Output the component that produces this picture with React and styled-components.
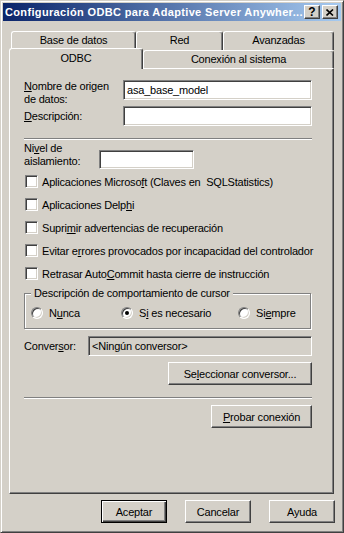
import React from "react";
import styled, { createGlobalStyle, css } from "styled-components";

const GlobalStyle = createGlobalStyle`
  * { box-sizing: border-box; }
  body {
    margin: 0;
    background: #d4d0c8;
    font-family: "Liberation Sans", Arial, sans-serif;
    font-size: 11px;
    letter-spacing: -0.2px;
    color: #000;
  }
`;

const raised = css`
  border: 1px solid;
  border-color: #fff #404040 #404040 #fff;
  box-shadow: inset -1px -1px #808080, inset 1px 1px #d4d0c8;
  background: #d4d0c8;
`;

const sunken = css`
  border: 1px solid;
  border-color: #808080 #fff #fff #808080;
  box-shadow: inset 1px 1px #404040, inset -1px -1px #d4d0c8;
`;

const Window = styled.div`
  width: 344px;
  height: 533px;
  padding: 2px;
  border: 1px solid;
  border-color: #d4d0c8 #404040 #404040 #d4d0c8;
  box-shadow: inset 1px 1px #fff, inset -1px -1px #808080;
  background: #d4d0c8;
  display: flex;
  flex-direction: column;
`;

const TitleBar = styled.div`
  height: 18px;
  display: flex;
  align-items: center;
  padding: 0 3px 0 2px;
  background: linear-gradient(to right, #0a246a, #a6caf0);
  color: #fff;
`;

const TitleText = styled.div`
  flex: 1;
  font-weight: bold;
  font-size: 11px;
  letter-spacing: 0.35px;
  white-space: nowrap;
  overflow: hidden;
`;

const TitleButton = styled.div`
  ${raised};
  width: 16px;
  height: 14px;
  margin-left: ${({ $gap }) => $gap || 0}px;
  display: flex;
  align-items: center;
  justify-content: center;
  color: #000;
  font-weight: bold;
  font-size: 12px;
  letter-spacing: 0;
  line-height: 1;
`;

const Body = styled.div`
  flex: 1;
  display: flex;
  flex-direction: column;
  padding: 10px 7px 0 6px;
`;

const BackRow = styled.div`
  display: flex;
  height: 19px;
  margin-bottom: -2px;
  padding-left: 2px;
`;

const FrontRow = styled.div`
  display: flex;
  align-items: flex-end;
  height: 20px;
`;

const Tab = styled.div`
  width: ${({ $w }) => $w}px;
  height: ${({ $h }) => $h || 19}px;
  margin-bottom: ${({ $active }) => ($active ? -1 : 0)}px;
  position: relative;
  z-index: ${({ $active }) => ($active ? 2 : 0)};
  background: #d4d0c8;
  border-top: 1px solid #fff;
  border-left: 1px solid #fff;
  border-right: 1px solid #404040;
  box-shadow: inset -1px 0 #808080;
  border-radius: 3px 3px 0 0;
  text-align: center;
  line-height: 13px;
  padding-top: ${({ $active }) => ($active ? 3 : 2)}px;
`;

const Panel = styled.div`
  position: relative;
  z-index: 1;
  width: 325px;
  height: 426px;
  border: 1px solid;
  border-color: #fff #404040 #404040 #fff;
  box-shadow: inset -1px -1px #808080;
  padding: 11px 21px 0 14px;
  display: flex;
  flex-direction: column;
`;

const FieldRow = styled.div`
  display: flex;
  align-items: ${({ $top }) => ($top ? "flex-start" : "center")};
  margin-top: ${({ $mt }) => $mt || 0}px;
`;

const Label = styled.div`
  width: ${({ $w }) => $w}px;
  flex: none;
  line-height: 13px;
`;

const TextBox = styled.div`
  ${sunken};
  width: ${({ $w }) => $w}px;
  height: ${({ $h }) => $h || 20}px;
  margin-top: ${({ $mt }) => $mt || 0}px;
  background: ${({ $disabled }) => ($disabled ? "#d4d0c8" : "#fff")};
  padding: 3px 3px 0;
  line-height: 13px;
  white-space: nowrap;
`;

const Separator = styled.div`
  height: 2px;
  border-top: 1px solid #808080;
  border-bottom: 1px solid #fff;
  margin-top: ${({ $mt }) => $mt}px;
`;

const CheckRow = styled.div`
  height: 23px;
  display: flex;
  align-items: center;
  padding-left: 1px;
  white-space: pre;
  margin-top: ${({ $mt }) => $mt || 0}px;
`;

const CheckBox = styled.div`
  ${sunken};
  width: 13px;
  height: 13px;
  background: #fff;
  margin-right: 4px;
  flex: none;
`;

const GroupBox = styled.div`
  margin-top: 8px;
  border: 1px solid #808080;
  box-shadow: 1px 1px 0 #fff, inset 1px 1px 0 #fff;
  padding: 0 0 5px 6px;
  display: flex;
  flex-direction: column;
  width: 287px;
`;

const GroupTitle = styled.div`
  align-self: flex-start;
  margin: -7px 0 0 0;
  padding: 0 3px;
  background: #d4d0c8;
  line-height: 13px;
`;

const RadioRow = styled.div`
  margin-top: 3px;
  height: 20px;
  display: grid;
  grid-template-columns: 90px 117px 1fr;
  align-items: center;
`;

const RadioItem = styled.div`
  display: flex;
  align-items: center;
  gap: 6px;
`;

const RadioCircle = styled.div`
  width: 12px;
  height: 12px;
  border-radius: 50%;
  border: 1px solid;
  border-color: #808080 #fff #fff #808080;
  box-shadow: inset 1px 1px #404040, inset -1px -1px #d4d0c8;
  background: #fff;
  display: flex;
  align-items: center;
  justify-content: center;
  flex: none;
`;

const RadioDot = styled.div`
  width: 4px;
  height: 4px;
  border-radius: 50%;
  background: #000;
`;

const Button = styled.div`
  ${raised};
  width: ${({ $w }) => $w}px;
  height: 23px;
  margin-top: ${({ $mt }) => $mt || 0}px;
  align-self: flex-end;
  display: flex;
  align-items: center;
  justify-content: center;
  ${({ $default }) =>
    $default &&
    css`
      border-color: #000;
      box-shadow: inset 1px 1px #fff, inset -1px -1px #404040,
        inset -2px -2px #808080;
    `}
`;

const ButtonRow = styled.div`
  display: flex;
  justify-content: flex-end;
  gap: 18px;
  margin-top: 6px;
  margin-right: -1px;
`;

const U = styled.span`
  text-decoration: underline;
`;

const Check = ({ children, mt }) => (
  <CheckRow $mt={mt}>
    <CheckBox />
    <span>{children}</span>
  </CheckRow>
);

const Radio = ({ children, checked }) => (
  <RadioItem>
    <RadioCircle>{checked && <RadioDot />}</RadioCircle>
    <span>{children}</span>
  </RadioItem>
);

export default function App() {
  return (
    <>
      <GlobalStyle />
      <Window>
        <TitleBar>
          <TitleText>Configuración ODBC para Adaptive Server Anywher...</TitleText>
          <TitleButton>?</TitleButton>
          <TitleButton $gap={2}>
            <svg width="8" height="7" viewBox="0 0 8 7">
              <path d="M0.5 0.5 L7 6.5 M7 0.5 L0.5 6.5" stroke="#000" strokeWidth="1.6" />
            </svg>
          </TitleButton>
        </TitleBar>
        <Body>
          <BackRow>
            <Tab $w={125}>Base de datos</Tab>
            <Tab $w={87}>Red</Tab>
            <Tab $w={111}>Avanzadas</Tab>
          </BackRow>
          <FrontRow>
            <Tab $w={134} $h={21} $active>
              ODBC
            </Tab>
            <Tab $w={191} $h={18}>
              Conexión al sistema
            </Tab>
          </FrontRow>
          <Panel>
            <FieldRow $top>
              <Label $w={99}>
                <U>N</U>ombre de origen
                <br />
                de datos:
              </Label>
              <TextBox $w={189}>asa_base_model</TextBox>
            </FieldRow>
            <FieldRow>
              <Label $w={99}>
                <U>D</U>escripción:
              </Label>
              <TextBox $w={189} />
            </FieldRow>
            <Separator $mt={12} />
            <FieldRow $top $mt={2}>
              <Label $w={75}>
                Ni<U>v</U>el de
                <br />
                aislamiento:
              </Label>
              <TextBox $w={95} $h={19} $mt={8} />
            </FieldRow>
            <Check mt={1}>
              Aplicaciones Microso<U>f</U>t (Claves en  SQLStatistics)
            </Check>
            <Check>
              Aplicaciones Delp<U>h</U>i
            </Check>
            <Check>
              Supri<U>m</U>ir advertencias de recuperación
            </Check>
            <Check>
              Evitar e<U>r</U>rores provocados por incapacidad del controlador
            </Check>
            <Check>
              Retrasar Auto<U>C</U>ommit hasta cierre de instrucción
            </Check>
            <GroupBox>
              <GroupTitle>Descripción de comportamiento de cursor</GroupTitle>
              <RadioRow>
                <Radio>
                  N<U>u</U>nca
                </Radio>
                <Radio checked>
                  S<U>i</U> es necesario
                </Radio>
                <Radio>
                  Si<U>e</U>mpre
                </Radio>
              </RadioRow>
            </GroupBox>
            <FieldRow $mt={7}>
              <Label $w={64}>
                Conver<U>s</U>or:
              </Label>
              <TextBox $w={224} $disabled>
                &lt;Ningún conversor&gt;
              </TextBox>
            </FieldRow>
            <Button $w={144} $mt={6}>
              Se<U>l</U>eccionar conversor...
            </Button>
            <Separator $mt={12} />
            <Button $w={101} $mt={6}>
              <U>P</U>robar conexión
            </Button>
          </Panel>
          <ButtonRow>
            <Button $w={66} $default>
              Aceptar
            </Button>
            <Button $w={66}>Cancelar</Button>
            <Button $w={66}>Ayuda</Button>
          </ButtonRow>
        </Body>
      </Window>
    </>
  );
}
